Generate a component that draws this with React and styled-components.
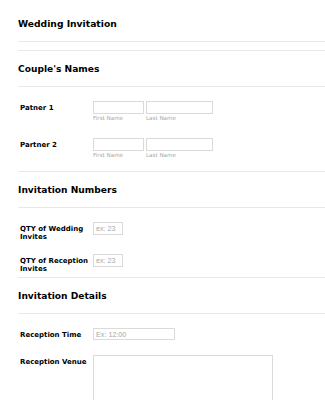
import React from 'react';
import styled, { createGlobalStyle } from 'styled-components';

const Global = createGlobalStyle`
  html, body { margin: 0; padding: 0; background: #fff; }
  body { font-family: "DejaVu Sans", Verdana, sans-serif; color: #000; }
`;

const Form = styled.div`
  width: 325px;
  height: 400px;
  overflow: hidden;
  padding-left: 18px;
  box-sizing: border-box;
`;

const Title = styled.h1`
  margin: 0;
  padding: 18px 0 11px;
  font-size: 9.2px;
  line-height: 12px;
  font-weight: bold;
  border-bottom: 1px solid #e8e8e8;
`;

const Section = styled.section`
  border-top: 1px solid #e8e8e8;
  margin-top: ${p => (p.$first ? '8px' : '0')};
`;

const SectionTitle = styled.h2`
  margin: 0;
  padding: 12px 0 11px;
  font-size: 9.1px;
  line-height: 12px;
  font-weight: bold;
  border-bottom: 1px solid #e8e8e8;
`;

const Fields = styled.div`
  display: flex;
  flex-direction: column;
  gap: ${p => p.$gap}px;
  padding: 14px 0 ${p => p.$pb}px 2px;
`;

const Row = styled.div`
  display: flex;
  align-items: flex-start;
  min-height: ${p => p.$h}px;
`;

const Label = styled.div`
  width: 73px;
  flex: none;
  padding-top: 2.5px;
  font-size: 7px;
  line-height: 8px;
  font-weight: bold;
`;

const Group = styled.div`
  display: flex;
  gap: 2px;
`;

const Sub = styled.div`
  display: flex;
  flex-direction: column;
`;

const Input = styled.input`
  box-sizing: border-box;
  width: ${p => p.$w}px;
  height: ${p => p.$hh || 13}px;
  margin: 0;
  padding: 0 2px;
  border: 1px solid #dadada;
  border-radius: 0;
  font-family: "Liberation Sans", Arial, sans-serif;
  font-size: 7.2px;
  color: #333;
  background: #fff;
  outline: none;
  &::placeholder { color: #a8a8a8; }
`;

const SubLabel = styled.span`
  font-size: 5.6px;
  line-height: 8px;
  color: #a8a8a8;
`;

const TextArea = styled.textarea`
  box-sizing: border-box;
  width: 180px;
  height: 70px;
  margin: 0;
  padding: 0;
  border: 1px solid #dadada;
  border-radius: 0;
  resize: none;
  display: block;
  outline: none;
`;

function NameField({ label }) {
  return (
    <Row $h={22}>
      <Label>{label}</Label>
      <Group>
        <Sub>
          <Input $w={51} />
          <SubLabel>First Name</SubLabel>
        </Sub>
        <Sub>
          <Input $w={67} />
          <SubLabel>Last Name</SubLabel>
        </Sub>
      </Group>
    </Row>
  );
}

export default function App() {
  return (
    <>
      <Global />
      <Form>
        <Title>Wedding Invitation</Title>

        <Section $first>
          <SectionTitle>Couple's Names</SectionTitle>
          <Fields $gap={15} $pb={11}>
            <NameField label="Patner 1" />
            <NameField label="Partner 2" />
          </Fields>
        </Section>

        <Section>
          <SectionTitle>Invitation Numbers</SectionTitle>
          <Fields $gap={13} $pb={4}>
            <Row $h={19}>
              <Label>QTY of Wedding Invites</Label>
              <Input $w={30} placeholder="ex: 23" />
            </Row>
            <Row $h={19}>
              <Label>QTY of Reception Invites</Label>
              <Input $w={30} placeholder="ex: 23" />
            </Row>
          </Fields>
        </Section>

        <Section>
          <SectionTitle>Invitation Details</SectionTitle>
          <Fields $gap={15} $pb={0}>
            <Row $h={12}>
              <Label>Reception Time</Label>
              <Input $w={82} $hh={12} placeholder="Ex: 12:00" />
            </Row>
            <Row $h={60}>
              <Label>Reception Venue</Label>
              <TextArea />
            </Row>
          </Fields>
        </Section>
      </Form>
    </>
  );
}
